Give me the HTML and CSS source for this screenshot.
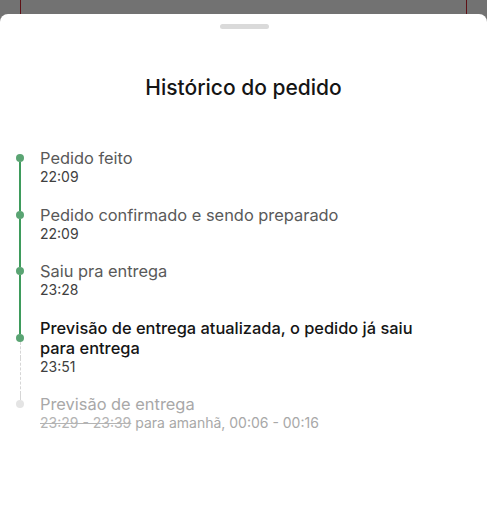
FILE: index.html
```html
<!DOCTYPE html>
<html lang="pt-BR">
<head>
    <meta charset="UTF-8">
    <meta name="viewport" content="width=device-width, initial-scale=1.0">
    <title>Histórico do pedido</title>
    <link rel="stylesheet" href="styles.css">
</head>
<body>
<div class="backdrop"></div>
<div class="sheet">
    <div class="handle"></div>
    <h1 class="sheet-title">Histórico do pedido</h1>
    <ol class="timeline">
        <li class="step first">
            <span class="rail"><i class="seg"></i><i class="dot"></i><i class="seg"></i></span>
            <span class="step-title">Pedido feito</span>
            <span class="rail rest"><i class="seg"></i></span>
            <span class="step-time">22:09</span>
        </li>
        <li class="step">
            <span class="rail"><i class="seg"></i><i class="dot"></i><i class="seg"></i></span>
            <span class="step-title">Pedido confirmado e sendo preparado</span>
            <span class="rail rest"><i class="seg"></i></span>
            <span class="step-time">22:09</span>
        </li>
        <li class="step">
            <span class="rail"><i class="seg"></i><i class="dot"></i><i class="seg"></i></span>
            <span class="step-title">Saiu pra entrega</span>
            <span class="rail rest"><i class="seg"></i></span>
            <span class="step-time">23:28</span>
        </li>
        <li class="step current">
            <span class="rail"><i class="seg"></i><i class="dot"></i><i class="seg"></i></span>
            <span class="step-title">Previsão de entrega atualizada, o pedido já saiu para entrega</span>
            <span class="rail rest"><i class="seg"></i></span>
            <span class="step-time">23:51</span>
        </li>
        <li class="step pending">
            <span class="rail"><i class="seg"></i><i class="dot"></i><i class="seg"></i></span>
            <span class="step-title">Previsão de entrega</span>
            <span class="rail rest"><i class="seg"></i></span>
            <span class="step-time"><s>23:29 - 23:39</s> para amanhã, 00:06 - 00:16</span>
        </li>
    </ol>
</div>
</body>
</html>
```

FILE: styles.css
```css
html, body {
    height: 100%;
}

body {
    margin: 0;
    background-color: #727272;
    font-family: Inter, "Noto Sans", sans-serif;
    display: flex;
    flex-direction: column;
}

.backdrop {
    height: 14px;
    margin: 0 20px;
    border-left: 1px solid #5e1015;
    border-right: 1px solid #5e1015;
    flex-shrink: 0;
}

.sheet {
    flex: 1;
    background-color: #fff;
    border-radius: 8px 8px 0 0;
    padding: 10px 40px 0 0;
}

.handle {
    width: 49px;
    height: 5px;
    margin: 0 auto;
    margin-left: calc(50% + 20px - 24px);
    border-radius: 3px;
    background-color: #dadada;
}

.sheet-title {
    margin: 45px 0 0 40px;
    text-align: center;
    font-size: 21px;
    font-weight: 500;
    color: #151515;
    line-height: 28px;
}

.timeline {
    list-style: none;
    margin: 46px 0 0;
    padding: 0;
}

.step {
    display: grid;
    grid-template-columns: 40px 1fr;
}

.step-title {
    font-size: 16.4px;
    line-height: 20px;
    color: #595959;
}

.step-time {
    font-size: 14px;
    line-height: 18px;
    color: #404040;
    padding-bottom: 18.5px;
}

.rail {
    display: flex;
    flex-direction: column;
    align-items: center;
}

.rail .seg {
    flex: 1;
    width: 2px;
    background-color: #3e9b5c;
}

.rail .dot {
    width: 8px;
    height: 8px;
    border-radius: 50%;
    background-color: #5aa473;
    flex-shrink: 0;
}

.first .rail:first-child .seg:first-child {
    visibility: hidden;
}

.current .step-title {
    color: #151515;
    font-weight: 500;
}

.current .rail .seg:last-child,
.current .rest .seg,
.pending .rail:first-child .seg:first-child {
    width: 0;
    background: none;
    border-left: 1px dashed #d6d6d6;
}

.pending .rail .dot {
    background-color: #e4e4e4;
}

.pending .rail:first-child .seg:last-child,
.pending .rest .seg {
    visibility: hidden;
}

.pending .step-title,
.pending .step-time {
    color: #a8a8a8;
}

.pending s {
    color: #b4b4b4;
}
```
